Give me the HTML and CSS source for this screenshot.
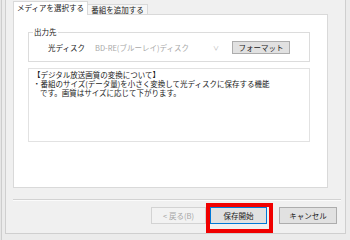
FILE: index.html
```html
<!DOCTYPE html>
<html lang="ja">
<head>
    <meta charset="UTF-8">
    <title>メディアを選択する</title>
    <link rel="stylesheet" href="styles.css">
</head>
<body>
    <div class="frame">
        <div class="dialog">
            <div class="tabs">
                <div class="tab selected">メディアを選択する</div>
                <div class="tab">番組を追加する</div>
            </div>

            <div class="tab-page">
                <fieldset class="group">
                    <legend>出力先</legend>
                    <div class="row">
                        <span class="row-label">光ディスク</span>
                        <div class="combo disabled">
                            <span>BD-RE(ブルーレイ)ディスク</span>
                            <span class="chevron">∨</span>
                        </div>
                        <button class="btn small">フォーマット</button>
                    </div>
                </fieldset>

                <div class="info-box">
                    <div>【デジタル放送画質の変換について】</div>
                    <div>・番組のサイズ(データ量)を小さく変換して光ディスクに保存する機能</div>
                    <div class="indent">です。画質はサイズに応じて下がります。</div>
                </div>
            </div>

            <div class="separator"></div>

            <div class="button-row">
                <button class="btn disabled-btn">&lt; 戻る(B)</button>
                <div class="highlight-wrap">
                    <button class="btn default-btn">保存開始</button>
                    <div class="highlight"></div>
                </div>
                <button class="btn cancel">キャンセル</button>
            </div>
        </div>
    </div>
</body>
</html>
```

FILE: styles.css
```css
body {
    margin: 0;
    font-family: "Noto Sans CJK JP", "Noto Sans", sans-serif;
    font-size: 7.5px;
    color: #1a1a1a;
    background-color: #f2f2f2;
}
.frame {
    width: 350px;
    height: 240px;
    box-sizing: border-box;
    background-color: #ebebeb;
    border-left: 1px solid #e6e6e6;
    box-shadow: inset 1px 0 #cdcdcd;
    padding: 0 4px 6px 4px;
}
.dialog {
    height: 234px;
    box-sizing: border-box;
    background-color: #f0f0f0;
    border: 1px solid #cfcfcf;
    border-top: none;
    padding: 1px 0 0 7px;
    display: flex;
    flex-direction: column;
}

/* tabs */
.tabs {
    display: flex;
    align-items: flex-end;
    height: 13px;
    position: relative;
    z-index: 1;
}
.tab {
    box-sizing: border-box;
    height: 10px;
    width: 60px;
    line-height: 9px;
    text-align: center;
    background-color: #f6f6f6;
    border: 1px solid #d9d9d9;
    border-bottom: none;
    border-left: none;
}
.tab.selected {
    width: 75px;
    height: 14px;
    margin-bottom: -1px;
    line-height: 12px;
    background-color: #fff;
    border-left: 1px solid #d9d9d9;
}
.tab-page {
    width: 315px;
    height: 174px;
    box-sizing: border-box;
    background-color: #fff;
    border: 1px solid #d9d9d9;
    padding: 13px 0 0 14px;
}

/* group box */
.group {
    margin: 0;
    padding: 0;
    width: 282px;
    box-sizing: border-box;
    border: 1px solid #dcdcdc;
}
.group legend {
    margin-left: 4px;
    padding: 0 1px;
    line-height: 8px;
}
.row {
    display: flex;
    align-items: center;
    height: 13px;
    margin: 5px 0 7px;
    padding-left: 19px;
}
.row-label {
    width: 42px;
}
.combo {
    width: 132px;
    display: flex;
    justify-content: space-between;
    align-items: center;
    padding: 0 3px 0 5px;
    box-sizing: border-box;
}
.combo.disabled {
    color: #a8a8a8;
}
.chevron {
    font-size: 6px;
    color: #b4b4b4;
}

/* buttons */
.btn {
    font-family: inherit;
    font-size: 7.5px;
    color: #1a1a1a;
    background-color: #e1e1e1;
    border: 1px solid #adadad;
    padding: 0;
    margin: 0;
    height: 17px;
    line-height: 14px;
}
.btn.small {
    width: 58px;
    height: 13px;
    line-height: 10px;
    margin-left: 10px;
}

/* text box */
.info-box {
    width: 282px;
    height: 74px;
    box-sizing: border-box;
    margin-top: 6px;
    border: 1px solid #e2e2e2;
    padding: 1px 4px;
    line-height: 9px;
}
.info-box .indent {
    padding-left: 7px;
}

.separator {
    margin: 11px 4px 0 0;
    border-top: 1px solid #d2d2d2;
    border-bottom: 1px solid #fbfbfb;
}
.button-row {
    display: flex;
    justify-content: flex-end;
    margin: 6px 8px 0 0;
}
.disabled-btn {
    width: 55px;
    color: #a6a6a6;
    background-color: #f2f2f2;
    border-color: #d3d3d3;
}
.highlight-wrap {
    position: relative;
    margin-left: 4px;
}
.default-btn {
    width: 57px;
    border-color: #0078d7;
}
.highlight {
    position: absolute;
    left: -4px;
    top: -4px;
    width: 67px;
    height: 30px;
    box-sizing: border-box;
    border: 4px solid #f00000;
}
.cancel {
    width: 58px;
    margin-left: 12px;
}
```
